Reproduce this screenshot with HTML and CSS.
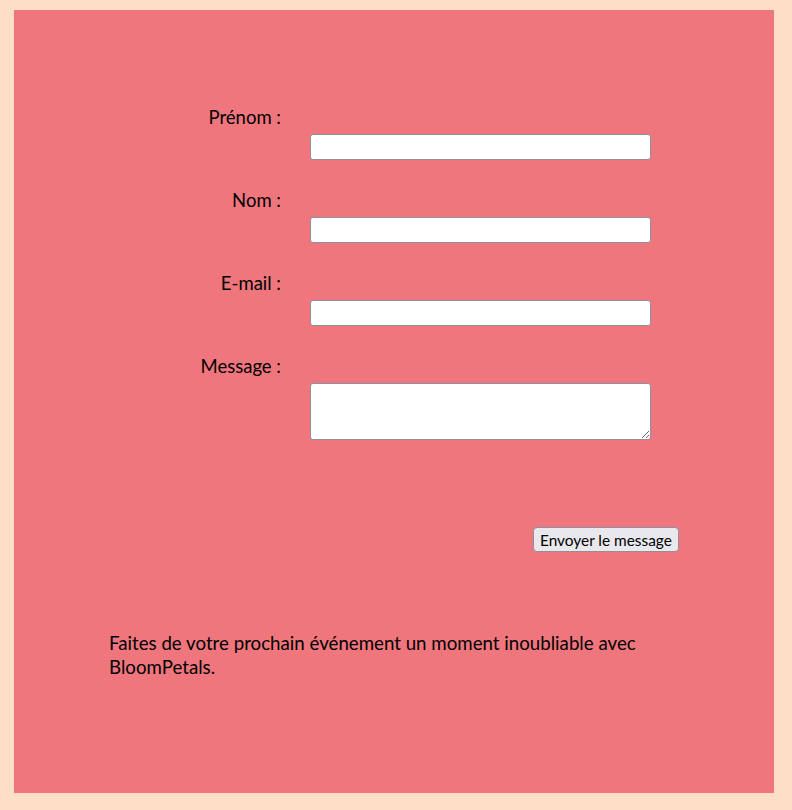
FILE: index.html
```html
<!DOCTYPE html>
<html lang="fr">
<head>
<meta charset="utf-8">
<title>Contact - BloomPetals</title>
<link rel="stylesheet" href="styles.css">
</head>
<body>
<main class="panel">
  <form class="contact-form">
    <div class="field">
      <label for="prenom">Prénom :</label>
      <input type="text" id="prenom">
    </div>
    <div class="field">
      <label for="nom">Nom :</label>
      <input type="text" id="nom">
    </div>
    <div class="field">
      <label for="email">E-mail :</label>
      <input type="email" id="email">
    </div>
    <div class="field">
      <label for="message">Message :</label>
      <textarea id="message"></textarea>
    </div>
    <div class="actions">
      <button type="submit">Envoyer le message</button>
    </div>
  </form>
  <p class="tagline">Faites de votre prochain événement un moment inoubliable avec BloomPetals.</p>
</main>
</body>
</html>
```
FILE: styles.css
```css
html, body {
  margin: 0;
  padding: 0;
}
body {
  background: #ffdec8;
  font-family: Lato, "Open Sans", sans-serif;
  color: #000;
  height: 810px;
  overflow: hidden;
  padding: 10px 18px 17px 14px;
  box-sizing: border-box;
}
.panel {
  background: #f0767e;
  height: 783px;
  box-sizing: border-box;
  padding-top: 96px;
}
.contact-form {
  display: flex;
  flex-direction: column;
  gap: 29px;
}
.field {
  display: grid;
  grid-template-columns: 267px 341px;
  column-gap: 29px;
  row-gap: 6px;
}
.field label {
  grid-column: 1;
  grid-row: 1;
  text-align: right;
  font-size: 18.5px;
  line-height: 22px;
}
.field input,
.field textarea {
  grid-column: 2;
  grid-row: 2;
  box-sizing: border-box;
  width: 341px;
  margin: 0;
  border: 1px solid #8f8f9d;
  border-radius: 3px;
  background: #fff;
  font-family: inherit;
}
.field input {
  height: 26px;
}
.field textarea {
  height: 57px;
  resize: vertical;
}
.actions {
  display: flex;
  padding-left: 519px;
  margin-top: 58px;
}
.actions button {
  height: 25px;
  padding: 0 6px;
  font-family: inherit;
  font-size: 15.4px;
  color: #000;
  background: #e9e9ed;
  border: 1px solid #8f8f9d;
  border-radius: 4px;
}
.tagline {
  margin: 79px 0 0;
  padding: 0 95px;
  font-size: 18.7px;
  line-height: 24px;
}
```
